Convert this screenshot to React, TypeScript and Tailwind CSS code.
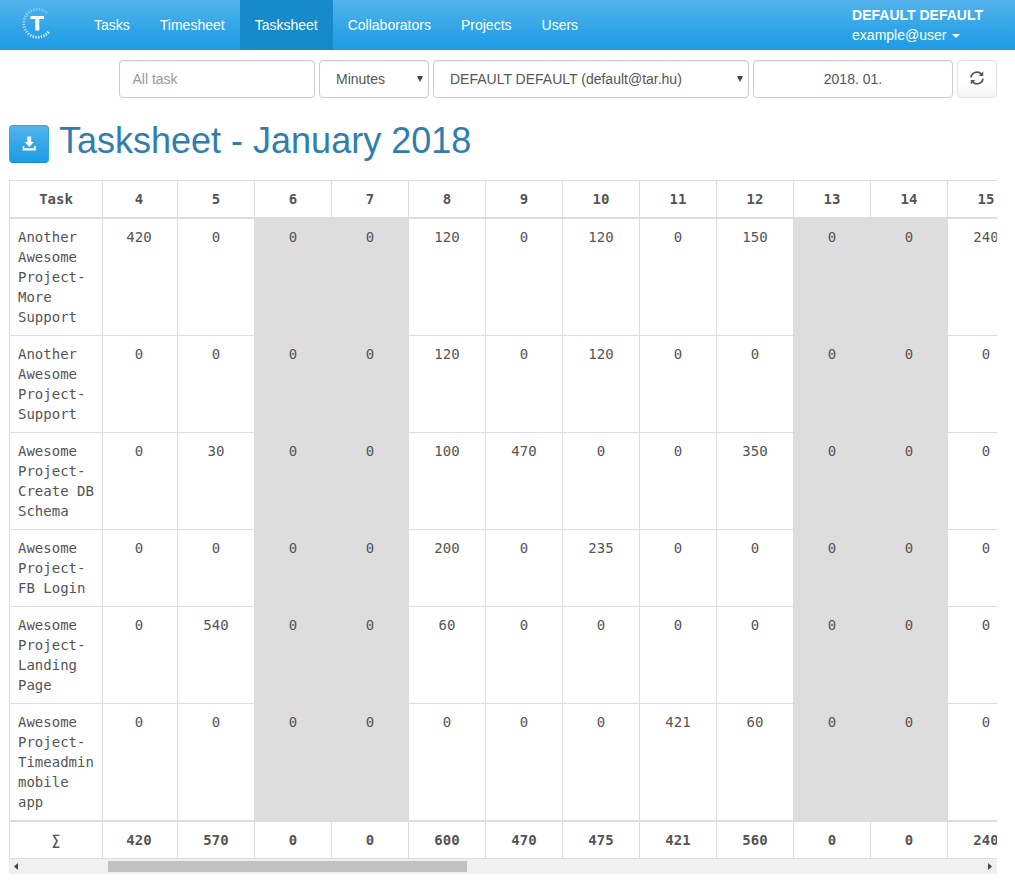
import React from 'react';

const days = [4, 5, 6, 7, 8, 9, 10, 11, 12, 13, 14, 15];
const weekend = [6, 7, 13, 14];

const rows: { task: string[]; values: number[]; height: string }[] = [
  { task: ['Another', 'Awesome', 'Project-', 'More', 'Support'], values: [420, 0, 0, 0, 120, 0, 120, 0, 150, 0, 0, 240], height: 'h-[117px]' },
  { task: ['Another', 'Awesome', 'Project-', 'Support'], values: [0, 0, 0, 0, 120, 0, 120, 0, 0, 0, 0, 0], height: 'h-[97px]' },
  { task: ['Awesome', 'Project-', 'Create DB', 'Schema'], values: [0, 30, 0, 0, 100, 470, 0, 0, 350, 0, 0, 0], height: 'h-[97px]' },
  { task: ['Awesome', 'Project-', 'FB Login'], values: [0, 0, 0, 0, 200, 0, 235, 0, 0, 0, 0, 0], height: 'h-[77px]' },
  { task: ['Awesome', 'Project-', 'Landing', 'Page'], values: [0, 540, 0, 0, 60, 0, 0, 0, 0, 0, 0, 0], height: 'h-[97px]' },
  { task: ['Awesome', 'Project-', 'Timeadmin', 'mobile', 'app'], values: [0, 0, 0, 0, 0, 0, 0, 421, 60, 0, 0, 0], height: 'h-[116px]' },
];
const totals = [420, 570, 0, 0, 600, 470, 475, 421, 560, 0, 0, 240];

const field =
  'flex h-[38px] items-center rounded border border-[#ccc] bg-white shadow-[inset_0_1px_1px_rgba(0,0,0,0.075)]';

function Logo() {
  const ticks = Array.from({ length: 25 }, (_, i) => i);
  return (
    <svg className="h-[33px] w-[30px]" viewBox="0 0 30 33">
      {ticks.map((i) => {
        const a = ((41 + i * 11.2) * Math.PI) / 180;
        const c = Math.cos(a);
        const s = Math.sin(a);
        return (
          <line
            key={i}
            x1={15.7 + 12.6 * c}
            y1={16.3 + 12.6 * s}
            x2={15.7 + 15.4 * c}
            y2={16.3 + 15.4 * s}
            stroke="#fff"
            strokeWidth="1.3"
            opacity={0.95 - i * 0.03}
          />
        );
      })}
      <path d="M8.500 9h13.500v3h-4.700v11.500h-4V12H8.500z" fill="#fff" />
    </svg>
  );
}

function Arrow() {
  return (
    <svg className="h-[6px] w-[6px]" viewBox="0 0 6 6">
      <path d="M0 0h6L3 6z" fill="#444" />
    </svg>
  );
}

function NavItem({ label, active = false }: { label: string; active?: boolean }) {
  return (
    <a className={`flex h-[50px] items-center px-[15px] ${active ? 'bg-[#178acc]' : ''}`}>{label}</a>
  );
}

function Cell({ day, value }: { day: number; value: number }) {
  return (
    <td
      className={`border-b border-l border-[#ddd] pt-2 text-center align-top ${day === 4 ? 'pr-[2px]' : ''} ${
        weekend.includes(day) ? 'bg-[#ddd]' : ''
      }`}
    >
      {value}
    </td>
  );
}

export default function App() {
  return (
    <div className="h-[883px] w-[1015px] overflow-hidden bg-white font-['Liberation_Sans',Arial,sans-serif] text-sm leading-5 text-[#555]">
      <nav className="flex h-[50px] bg-[linear-gradient(#54b4eb,#2fa4e7_60%,#1d9ce5)] text-white">
        <div className="flex w-[79px] pt-[7px] pl-[22px]">
          <Logo />
        </div>
        <NavItem label="Tasks" />
        <NavItem label="Timesheet" />
        <NavItem label="Tasksheet" active />
        <NavItem label="Collaborators" />
        <NavItem label="Projects" />
        <NavItem label="Users" />
        <div className="mr-8 ml-auto pt-[5px]">
          <div className="font-bold">DEFAULT DEFAULT</div>
          <div className="flex items-center">
            example@user
            <svg className="mt-[2px] ml-[6px] h-1 w-2" viewBox="0 0 8 4">
              <path d="M0 0h8L4 4z" fill="#fff" />
            </svg>
          </div>
        </div>
      </nav>

      <div className="mt-[10px] flex gap-1 pl-[119px]">
        <div className={`${field} w-[196px] pl-[12.500px] text-[#999]`}>All task</div>
        <div className={`${field} w-[110px] justify-between pr-[5px] pl-4`}>
          Minutes
          <Arrow />
        </div>
        <div className={`${field} w-[316px] justify-between pr-[5px] pl-4`}>
          DEFAULT DEFAULT (default@tar.hu)
          <Arrow />
        </div>
        <div className={`${field} w-[200px] justify-center`}>2018. 01.</div>
        <button className="flex h-[38px] w-10 items-center justify-center rounded border border-[#e2e2e2] bg-[linear-gradient(#fff,#fff_60%,#f5f5f5)]">
          <svg className="-mt-[2px] h-[14px] w-[14px]" viewBox="0 0 14 14">
            <path d="M1 6.300A6 5.600 0 0 1 11.500 3.200M13 7.700A6 5.600 0 0 1 2.500 10.800" fill="none" stroke="#555" strokeWidth="1.700" />
            <path d="M13.200 0.500V5H8.700zM0.800 13.500V9H5.300z" fill="#555" />
          </svg>
        </button>
      </div>

      <div className="mt-[22px] flex h-[60px] pl-[9px]">
        <button className="mt-[5px] flex h-[38px] w-10 items-center justify-center rounded border border-[#2fa4e7] border-b-[#178acc] bg-[linear-gradient(#54b4eb,#2fa4e7_60%,#1d9ce5)]">
          <svg className="-mt-[1px] h-[15px] w-[14px]" viewBox="0 0 14 15">
            <path d="M5.200 0.500h4V6h2.600L7.200 11 2.800 6h2.400zM.7 10H2.300V12.200H12.200V10H13.800V14.500H.7z" fill="#fff" />
          </svg>
        </button>
        <h1 className="mt-px ml-[10px] text-[36px] leading-[40px] text-[#317eac]">Tasksheet - January 2018</h1>
      </div>

      <div className="ml-[9px] w-[988px] overflow-hidden font-['DejaVu_Sans_Mono',monospace]">
        <table className="w-[1015px] table-fixed border-separate border-spacing-0 border-t border-[#ddd]">
          <colgroup>
            <col className="w-[93px]" />
            <col className="w-[75px]" />
            {days.slice(1).map((d) => (
              <col key={d} className="w-[77px]" />
            ))}
          </colgroup>
          <thead>
            <tr className="h-[38px]">
              <th className="border-b-2 border-l border-[#ddd]">Task</th>
              {days.map((d) => (
                <th key={d} className={`border-b-2 border-l border-[#ddd] ${d === 4 ? 'pr-[2px]' : ''}`}>
                  {d}
                </th>
              ))}
            </tr>
          </thead>
          <tbody>
            {rows.map((r, i) => (
              <tr key={i} className={`${r.height} ${i === rows.length - 1 ? '[&>td]:border-b-0' : ''}`}>
                <td className="border-b border-l border-[#ddd] py-2 pl-2 align-top whitespace-nowrap">
                  {r.task.map((line) => (
                    <div key={line}>{line}</div>
                  ))}
                </td>
                {r.values.map((v, j) => (
                  <Cell key={j} day={days[j]} value={v} />
                ))}
              </tr>
            ))}
          </tbody>
          <tfoot>
            <tr className="h-[39px]">
              <th className="border-t-2 border-b border-l border-[#ddd]">∑</th>
              {totals.map((v, j) => (
                <th key={j} className={`border-t-2 border-b border-l border-[#ddd] ${j === 0 ? 'pr-[2px]' : ''}`}>
                  {v}
                </th>
              ))}
            </tr>
          </tfoot>
        </table>
        <div className="flex h-[15px] items-center bg-[#f0f0f0]">
          <svg className="ml-[5px] h-[7px] w-1" viewBox="0 0 4 7">
            <path d="M4 0v7L0 3.500z" fill="#444" />
          </svg>
          <div className="ml-[90px] h-[11px] w-[359px] bg-[#c1c1c1]" />
          <svg className="mr-[5px] ml-auto h-[7px] w-1" viewBox="0 0 4 7">
            <path d="M0 0v7l4-3.500z" fill="#444" />
          </svg>
        </div>
      </div>
    </div>
  );
}
